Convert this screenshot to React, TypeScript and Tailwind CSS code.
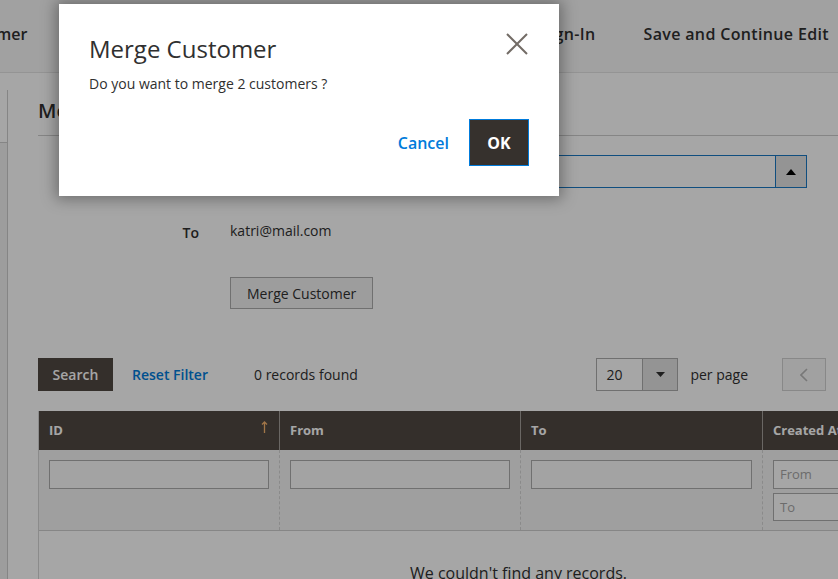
import React from "react";

const cols = [
  { key: "id", label: "ID", w: "w-[240px]" },
  { key: "from", label: "From", w: "w-[241px]" },
  { key: "to", label: "To", w: "w-[242px]" },
];

function CloseIcon() {
  return (
    <svg width="22" height="22" viewBox="0 0 22 22" fill="none">
      <path d="M1 1 L21 21 M21 1 L1 21" stroke="#736c66" strokeWidth="2" />
    </svg>
  );
}

function SortArrow() {
  return (
    <svg width="7" height="12" viewBox="0 0 7 12" fill="none">
      <path d="M3.5 1 V12 M1 3.5 L3.5 1 L6 3.5" stroke="#f7b56f" strokeWidth="1.3" />
    </svg>
  );
}

export default function App() {
  return (
    <div className="relative w-[838px] h-[579px] overflow-hidden bg-white font-['Open_Sans',sans-serif] text-[#303030]">
      {/* page actions header */}
      <header className="h-[73px] flex items-start pt-[24px] bg-[#f8f8f8] border-b border-[#e3e3e3] text-[16px] leading-[20px] font-semibold">
        <span className="-ml-[4px]">mer</span>
        <div className="ml-auto flex gap-12 pr-[9px] tracking-[0.35px]">
          <span>Sign-In</span>
          <span>Save and Continue Edit</span>
        </div>
      </header>

      <div className="flex">
        {/* left tabs column, mostly off screen */}
        <aside className="w-[8px] shrink-0 mt-[17px] flex flex-col">
          <div className="h-[53px] bg-white border-r border-b border-[#cccccc]" />
          <div className="h-[500px] bg-[#f1f1f1] border-r border-[#cccccc]" />
        </aside>

        <main className="flex-1 min-w-0 pl-[30px] pt-[24px]">
          <h2 className="text-[20px] leading-[28px] font-semibold pb-[10px] border-b border-[#cccccc]">
            Merge Customer
          </h2>

          {/* from */}
          <div className="mt-[19px] flex">
            <label className="w-[162px] shrink-0 text-right text-[14px] font-semibold pt-[6px] pr-[1px]">From</label>
            <div className="ml-[30px] w-[577px] shrink-0 h-[33px] flex border border-[#1979c3] bg-white">
              <div className="flex-1" />
              <div className="w-[31px] flex items-center justify-center bg-[#e3e3e3] border-l border-[#1979c3]">
                <svg width="10" height="6" viewBox="0 0 10 6">
                  <path d="M0 6 L5 0 L10 6 Z" fill="#000" />
                </svg>
              </div>
            </div>
          </div>

          {/* to */}
          <div className="mt-[33px] flex text-[14px] leading-[20px]">
            <label className="w-[162px] shrink-0 text-right font-semibold pt-[2px] pr-[1px]">To</label>
            <span className="ml-[30px]">katri@mail.com</span>
          </div>

          <div className="mt-[34px] pl-[192px]">
            <button className="h-[32px] px-[16px] border border-[#adadad] bg-[#f2f2f2] text-[14px]">
              Merge Customer
            </button>
          </div>

          {/* grid toolbar */}
          <div className="mt-[49px] w-[788px] flex items-center text-[14px]">
            <button className="h-[33px] w-[75px] bg-[#514943] text-white font-semibold">Search</button>
            <span className="ml-[19px] text-[#007bdb] font-semibold">Reset Filter</span>
            <span className="ml-[46px]">0 records found</span>
            <div className="ml-auto flex items-center">
              <div className="w-[82px] h-[33px] flex border border-[#adadad] bg-white">
                <span className="flex-1 pl-[9px] leading-[31px]">20</span>
                <div className="w-[35px] flex items-center justify-center bg-[#e3e3e3] border-l border-[#adadad]">
                  <svg width="9" height="5" viewBox="0 0 9 5">
                    <path d="M0 0 L9 0 L4.5 5 Z" fill="#303030" />
                  </svg>
                </div>
              </div>
              <span className="ml-[12px]">per page</span>
              <button className="ml-[34px] w-[44px] h-[33px] flex items-center justify-center border border-[#d1d1d1] bg-[#f8f8f8]">
                <svg width="8" height="14" viewBox="0 0 8 14" fill="none">
                  <path d="M7 1 L1 7 L7 13" stroke="#b8b8b8" strokeWidth="1.6" />
                </svg>
              </button>
            </div>
          </div>

          {/* data grid */}
          <div className="mt-[20px] w-[960px] border-l border-[#d6d6d6]">
            <div className="flex h-[39px] bg-[#514943] text-white text-[13px] font-bold">
              {cols.map((c, i) => (
                <div
                  key={c.key}
                  className={`${c.w} shrink-0 flex items-center justify-between px-[10px] ${i > 0 ? "border-l border-[#a39e9a]" : ""}`}
                >
                  <span>{c.label}</span>
                  {i === 0 && (
                    <span className="-mt-[8px] pr-[1px]">
                      <SortArrow />
                    </span>
                  )}
                </div>
              ))}
              <div className="flex-1 flex items-center px-[10px] border-l border-[#a39e9a]">Created At</div>
            </div>

            <div className="flex h-[81px] bg-[#f5f5f5] border-b border-[#cecece]">
              {cols.map((c, i) => (
                <div
                  key={c.key}
                  className={`${c.w} shrink-0 px-[10px] pt-[10px] ${i > 0 ? "border-l border-dashed border-[#d4d4d4]" : ""}`}
                >
                  <div className="h-[29px] border border-[#adadad] bg-[#fbfbfb]" />
                </div>
              ))}
              <div className="flex-1 px-[10px] pt-[10px] flex flex-col gap-[4px] border-l border-dashed border-[#d4d4d4]">
                <div className="h-[29px] border border-[#adadad] bg-white pl-[6px] text-[13px] leading-[27px] text-[#a6a6a6]">From</div>
                <div className="h-[28px] border border-[#adadad] bg-white pl-[6px] text-[13px] leading-[26px] text-[#a6a6a6]">To</div>
              </div>
            </div>

            <div className="pt-[30px] pb-[30px] text-center text-[16px] leading-[24px]">
              We couldn't find any records.
            </div>
          </div>
        </main>
      </div>

      {/* modal overlay */}
      <div className="absolute inset-0 bg-black/35" />
      <div className="absolute left-[59px] top-[4px] w-[500px] bg-white px-[30px] pt-[30px] pb-[30px] shadow-[0_0_14px_3px_rgba(0,0,0,0.35)]">
        <button className="absolute right-[31px] top-[29px]">
          <CloseIcon />
        </button>
        <h1 className="text-[24px] leading-[29px] font-normal">Merge Customer</h1>
        <p className="mt-[11px] text-[14px] leading-[20px]">Do you want to merge 2 customers ?</p>
        <div className="mt-[25px] flex items-center justify-end">
          <span className="text-[16px] font-semibold text-[#007bdb] mr-[20px]">Cancel</span>
          <button className="w-[60px] h-[47px] bg-[#36312d] border border-[#007bdb] text-white text-[16px] font-bold">
            OK
          </button>
        </div>
      </div>
    </div>
  );
}
